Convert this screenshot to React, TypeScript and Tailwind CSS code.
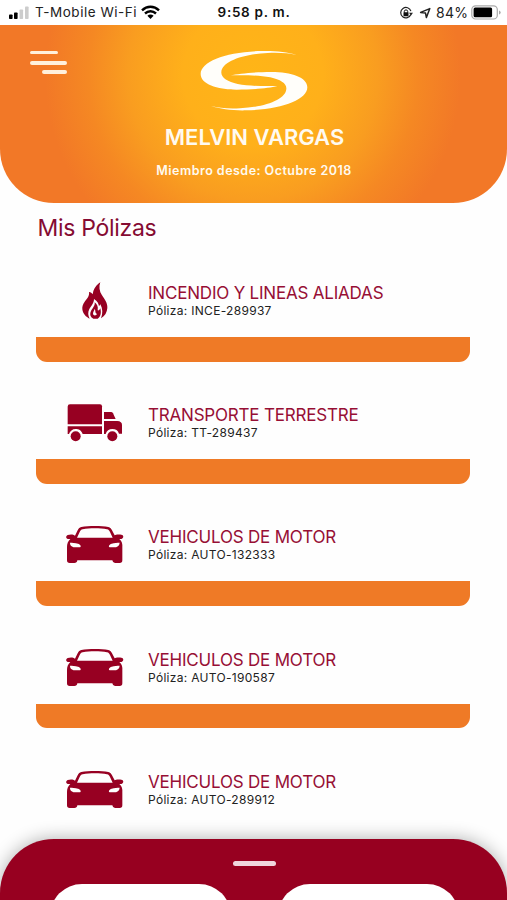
import React from "react";

type Kind = "fire" | "truck" | "car";

const policies: { kind: Kind; title: string; code: string }[] = [
  { kind: "fire", title: "INCENDIO Y LINEAS ALIADAS", code: "INCE-289937" },
  { kind: "truck", title: "TRANSPORTE TERRESTRE", code: "TT-289437" },
  { kind: "car", title: "VEHICULOS DE MOTOR", code: "AUTO-132333" },
  { kind: "car", title: "VEHICULOS DE MOTOR", code: "AUTO-190587" },
  { kind: "car", title: "VEHICULOS DE MOTOR", code: "AUTO-289912" },
];

const viewBoxes: Record<Kind, string> = {
  fire: "0 0 270 210",
  truck: "0 6 270 210",
  car: "0 12 270 210",
};

function PolicyIcon({ kind }: { kind: Kind }) {
  return (
    <svg width="90" height="70" viewBox={viewBoxes[kind]} className="block shrink-0 overflow-visible" fill="#970022">
      {kind === "fire" && (
        <>
          <path d="M151 37C143 42 134 52 130 63C129 67 129 70 128 73C126 69 122 66 117 66C119 78 111 86 105 94C99 102 96 110 97 118C99 132 108 141 119 146C114 137 113 127 118 117C123 108 132 100 132 87C143 94 146 101 147 109L151 103C158 115 159 130 153 145C165 138 171 127 172 114C173 99 164 88 156 76C148 64 146 50 151 37Z" />
          <path fillRule="evenodd" d="M134 97C136 107 127 115 123 123C118 134 122 142 130 146H143C153 140 154 127 151 115C149 120 146 122 143 121C145 109 141 102 134 97ZM134 117C138 124 134 129 141 132C139 136 134 138 130 134C127 129 132 123 134 117Z" />
        </>
      )}
      {kind === "truck" && (
        <>
          <path d="M60 43H150Q156 43 156 49V103H53V50Q53 43 60 43Z" />
          <path d="M53 109H156V132H98C94 121 86 117 77 117C67 117 60 123 57 132H53Z" />
          <path d="M162 66H183Q187 66 189 70L197 87H162Z" />
          <path d="M162 93H202Q216 94 216 105V131H207C204 121 197 117 187 117C177 117 170 122 167 132H162Z" />
          <circle cx="77" cy="139" r="15" />
          <circle cx="187" cy="139" r="15" />
        </>
      )}
      {kind === "car" && (
        <path fillRule="evenodd" d="M94 51C116 47 154 47 175 51C181 52 184 57 186 61L194 76C198 73 207 73 217 75C222 78 220 86 214 87H208C216 94 218 102 217 112V151Q217 159 209 159H195Q188 159 187 151H82Q81 159 73 159H59Q51 159 51 151V111C51 101 54 94 61 87H54C47 86 47 78 53 75C62 72 70 73 75 77L83 61C85 56 88 52 94 51ZM98 58C93 59 91 62 89 66L81 83H188L180 66C178 62 176 59 171 58C150 54 119 54 98 58ZM60 98C60 108 67 112 78 112H90C95 109 91 103 84 101C76 98 66 98 60 98ZM209 98C202 98 193 98 185 101C178 103 174 109 179 112H191C202 112 208 108 209 98Z" />
      )}
    </svg>
  );
}

function StatusBar() {
  return (
    <div className="flex h-[25px] items-center bg-white text-[13.5px] text-[#222]">
      <div className="flex w-[169px] items-center pl-2">
        <svg width="23" height="14" viewBox="0 0 23 14" className="shrink-0">
          <rect x="1" y="8.5" width="3.6" height="4.5" rx="0.8" fill="#000" />
          <rect x="6" y="6.5" width="3.6" height="6.5" rx="0.8" fill="#000" />
          <rect x="11.5" y="3.5" width="3.6" height="9.5" rx="0.8" fill="#ccc" />
          <rect x="17" y="0.5" width="3.6" height="12.5" rx="0.8" fill="#ccc" />
        </svg>
        <span className="ml-[4px] w-[106px] shrink-0 whitespace-nowrap tracking-[0.53px]">T-Mobile Wi-Fi</span>
        <svg width="19" height="15" viewBox="0 0 19 15" className="shrink-0">
          <g fill="none" stroke="#000" strokeWidth="2.4">
            <path d="M1 5.4C6 0.6 13 0.6 18 5.4" />
            <path d="M4 8.5C7.2 5.5 11.8 5.5 15 8.5" />
          </g>
          <path d="M6.4 10.8C8.3 9.2 10.7 9.2 12.6 10.8L9.5 14Z" />
        </svg>
      </div>
      <div className="w-[170px] text-center font-semibold tracking-[0.7px] text-[#111]">9:58 p. m.</div>
      <div className="flex flex-1 items-center pl-[60px]">
        <svg width="14" height="14" viewBox="0 0 14 14" className="shrink-0">
          <path d="M11.8 8.5A5.2 5.2 0 1 1 11.9 5.2" fill="none" stroke="#222" strokeWidth="1.2" />
          <path d="M10 6.7H14L12 9.4Z" fill="#222" />
          <rect x="4.5" y="6.3" width="5" height="3.9" rx="0.6" fill="#111" />
          <path d="M5.3 6.8V5.3C5.3 3.4 8.7 3.4 8.7 5.3V6.8" fill="none" stroke="#111" strokeWidth="1" />
        </svg>
        <svg width="14" height="14" viewBox="0 0 14 14" className="ml-[6px] shrink-0">
          <path d="M1.6 6.4L10.8 2.6L7.4 11.6L6.5 7.1Z" fill="none" stroke="#222" strokeWidth="1.5" strokeLinejoin="round" />
        </svg>
        <span className="ml-[3px] w-[35px] whitespace-nowrap text-[14px] tracking-[0.3px]">84%</span>
        <svg width="31" height="15" viewBox="0 0 31 15" className="shrink-0">
          <rect x="0.8" y="0.8" width="25.5" height="13.2" rx="3.8" fill="none" stroke="#aaa" strokeWidth="1.2" />
          <rect x="2.6" y="2.5" width="18.5" height="9.8" rx="1.5" fill="#000" />
          <path d="M28 5.4V9.4Q29.7 8.8 29.7 7.4T28 5.4Z" fill="#aaa" />
        </svg>
      </div>
    </div>
  );
}

export default function App() {
  return (
    <main className="relative h-[900px] w-[507px] overflow-hidden bg-[#fefefe] font-['Inter','Liberation_Sans',sans-serif]">
      <StatusBar />
      <header className="relative flex h-[177.5px] flex-col items-center rounded-b-[54px] bg-[radial-gradient(circle_at_253px_50px,#ffb517_0px,#ffb01a_70px,#f99d20_125px,#f58823_165px,#f27827_208px)] pt-[25px] text-[#fffaf0]">
        <button aria-label="Menu" className="absolute left-[30px] top-[25.5px] flex w-[37px] flex-col">
          <span className="h-[3.5px] w-[28px] rounded-full bg-[#fff0dc]" />
          <span className="mt-[7px] h-[3.5px] w-[37px] rounded-full bg-[#fff0dc]" />
          <span className="mt-[5.5px] h-[3.5px] w-[25px] self-end rounded-full bg-[#fff0dc]" />
        </button>
        <svg width="110" height="61" viewBox="177 30 330 183" className="block" fill="#fffefa">
          <path d="M470 45C442 36 405 32 365 33C260 35 182 64 182 102C182 132 230 149 290 149C345 149 388 144 412 138C365 139 325 138 293 132C263 125 243 113 244 97C245 65 307 43 383 39C418 37 447 40 470 45Z" />
          <path d="M213 198C241 207 278 212 318 211C423 209 502 180 502 142C502 112 454 96 394 96C339 96 296 101 272 106C319 105 359 106 391 112C421 119 440 130 439 146C438 178 376 201 300 205C265 207 236 204 213 198Z" />
        </svg>
        <h1 className="mt-[11px] whitespace-nowrap pl-[2px] text-[22px] font-semibold leading-[30px]">MELVIN VARGAS</h1>
        <p className="mt-[10px] whitespace-nowrap pl-[1px] text-[12.5px] font-semibold leading-[18px] tracking-[0.48px]">Miembro desde: Octubre 2018</p>
      </header>
      <h2 className="ml-[37.5px] mt-[9px] h-[31px] whitespace-nowrap text-[23px] font-normal leading-[32px] tracking-[-0.3px] text-[#850b32]">Mis Pólizas</h2>
      <section className="mt-[27.5px] flex flex-col">
        {policies.map((p, i) => (
          <article key={p.code} className="flex h-[122.2px] flex-col px-9">
            <div className="flex h-[67px] pl-[14px]">
              <PolicyIcon kind={p.kind} />
              <div className="ml-[8px] mt-[13px] whitespace-nowrap">
                <h3 className="text-[17px] font-normal leading-[20px] tracking-[-0.2px] text-[#970f35]">{p.title}</h3>
                <p className="text-[12px] leading-[15px] tracking-[0.3px] text-[#222]">Póliza: {p.code}</p>
              </div>
            </div>
            {i < policies.length - 1 && <div className="h-[24.5px] w-[434px] rounded-b-[11px] bg-[#ef7a26]" />}
          </article>
        ))}
      </section>
      <nav className="absolute inset-x-0 top-[839px] flex h-[120px] flex-col items-center rounded-t-[54px] bg-[#970020] shadow-[0_0_18px_rgba(0,0,0,0.32)]">
        <div className="ml-[2px] mt-[22px] h-[5px] w-[43px] rounded-full bg-[#f0d5dc]" />
        <div className="mt-[18px] flex w-full gap-[47px] pl-[50px]">
          <div className="h-[70px] w-[181px] rounded-[32px] bg-white" />
          <div className="h-[70px] w-[181px] rounded-[32px] bg-white" />
        </div>
      </nav>
    </main>
  );
}
